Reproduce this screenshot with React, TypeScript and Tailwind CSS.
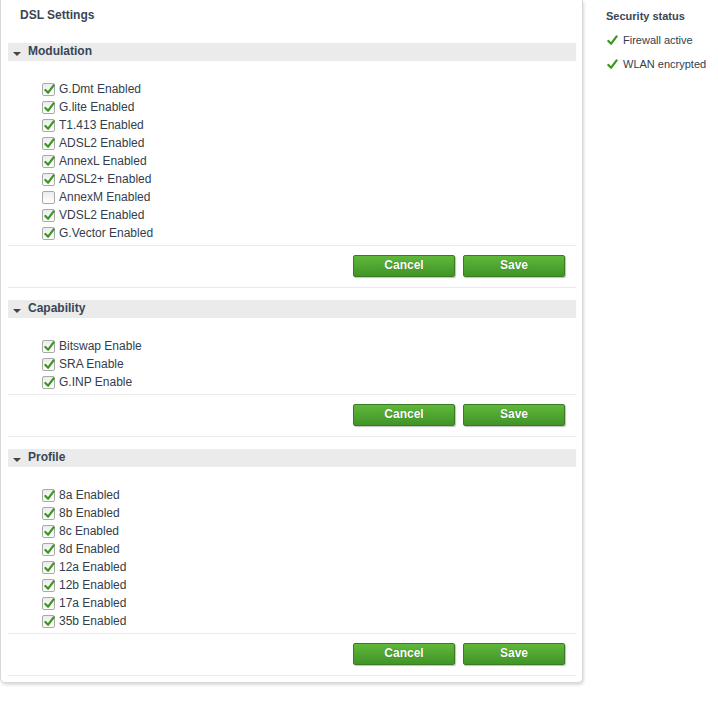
import React from 'react';

const font = { fontFamily: '"Liberation Sans", Arial, sans-serif' };

const Check = ({ className = '' }: { className?: string }) => (
  <svg viewBox="0 0 12 12" className={className}>
    <path d="M1.5 6.5 L4.5 9.5 L10.5 1.5" fill="none" stroke="#3a961d" strokeWidth="2.4" strokeLinecap="round" strokeLinejoin="round" />
  </svg>
);

const CheckBox = ({ checked }: { checked: boolean }) => (
  <span className="relative inline-block w-[13px] h-[13px] border border-[#a9a9a9] rounded-[2px] bg-gradient-to-b from-[#ececec] to-white">
    {checked && <Check className="absolute left-[1px] top-[0px] w-[11px] h-[11px]" />}
  </span>
);

const btn =
  'w-[102px] h-[22px] pb-[2px] rounded-[2px] border border-[#3a7a22] bg-gradient-to-b from-[#5fb83a] to-[#419427] text-white text-[12px] font-bold [text-shadow:0_0_1px_#2d6a18] shadow-[1px_1px_1px_rgba(0,0,0,0.25)]';

const Section = ({ title, items }: { title: string; items: [string, boolean][] }) => (
  <div>
    <div className="h-[18px] bg-[#ebebeb] flex items-center">
      <span className="ml-[5px] mt-[3px] w-0 h-0 border-l-[4px] border-r-[4px] border-t-[4px] border-l-transparent border-r-transparent border-t-[#444]" />
      <span className="ml-[7px] -mt-[2px] font-bold text-[12px] text-[#394555]">{title}</span>
    </div>
    <div className="pt-[19px] pb-[3px]">
      {items.map(([label, on]) => (
        <div key={label} className="h-[18px] flex items-center pl-[34px]">
          <CheckBox checked={on} />
          <span className="ml-[4px] text-[12px] text-[#333d4b]">{label}</span>
        </div>
      ))}
    </div>
    <div className="h-px bg-[#eaeaea]" />
    <div className="flex justify-end gap-[8px] pr-[11px] pt-[9px] pb-[10px]">
      <button className={btn}>Cancel</button>
      <button className={btn}>Save</button>
    </div>
    <div className="h-px bg-[#eaeaea]" />
  </div>
);

export default function App() {
  return (
    <div className="flex items-start bg-white min-h-[719px]" style={font}>
      <div className="w-[583px] border-x border-b border-[#d8d8d8] rounded-b-[5px] shadow-[1px_2px_3px_rgba(0,0,0,0.15)] pl-[7px] pr-[6px] pb-[6px]">
        <div className="h-[43px] pl-[12px] pt-[8px] leading-[14px] font-bold text-[12px] text-[#394555]">DSL Settings</div>
        <div className="flex flex-col gap-[12px]">
          <Section
            title="Modulation"
            items={[
              ['G.Dmt Enabled', true],
              ['G.lite Enabled', true],
              ['T1.413 Enabled', true],
              ['ADSL2 Enabled', true],
              ['AnnexL Enabled', true],
              ['ADSL2+ Enabled', true],
              ['AnnexM Enabled', false],
              ['VDSL2 Enabled', true],
              ['G.Vector Enabled', true],
            ]}
          />
          <Section
            title="Capability"
            items={[
              ['Bitswap Enable', true],
              ['SRA Enable', true],
              ['G.INP Enable', true],
            ]}
          />
          <Section
            title="Profile"
            items={[
              ['8a Enabled', true],
              ['8b Enabled', true],
              ['8c Enabled', true],
              ['8d Enabled', true],
              ['12a Enabled', true],
              ['12b Enabled', true],
              ['17a Enabled', true],
              ['35b Enabled', true],
            ]}
          />
        </div>
      </div>
      <div className="ml-[23px] pt-[9px]">
        <div className="font-bold text-[11px] leading-[14px] text-[#394555]">Security status</div>
        <div className="mt-[5px] flex flex-col">
          {['Firewall active', 'WLAN encrypted'].map((t) => (
            <div key={t} className="h-[24px] flex items-center">
              <Check className="w-[11px] h-[11px] ml-[1px]" />
              <span className="ml-[5px] text-[11px] text-[#333d4b]">{t}</span>
            </div>
          ))}
        </div>
      </div>
    </div>
  );
}
